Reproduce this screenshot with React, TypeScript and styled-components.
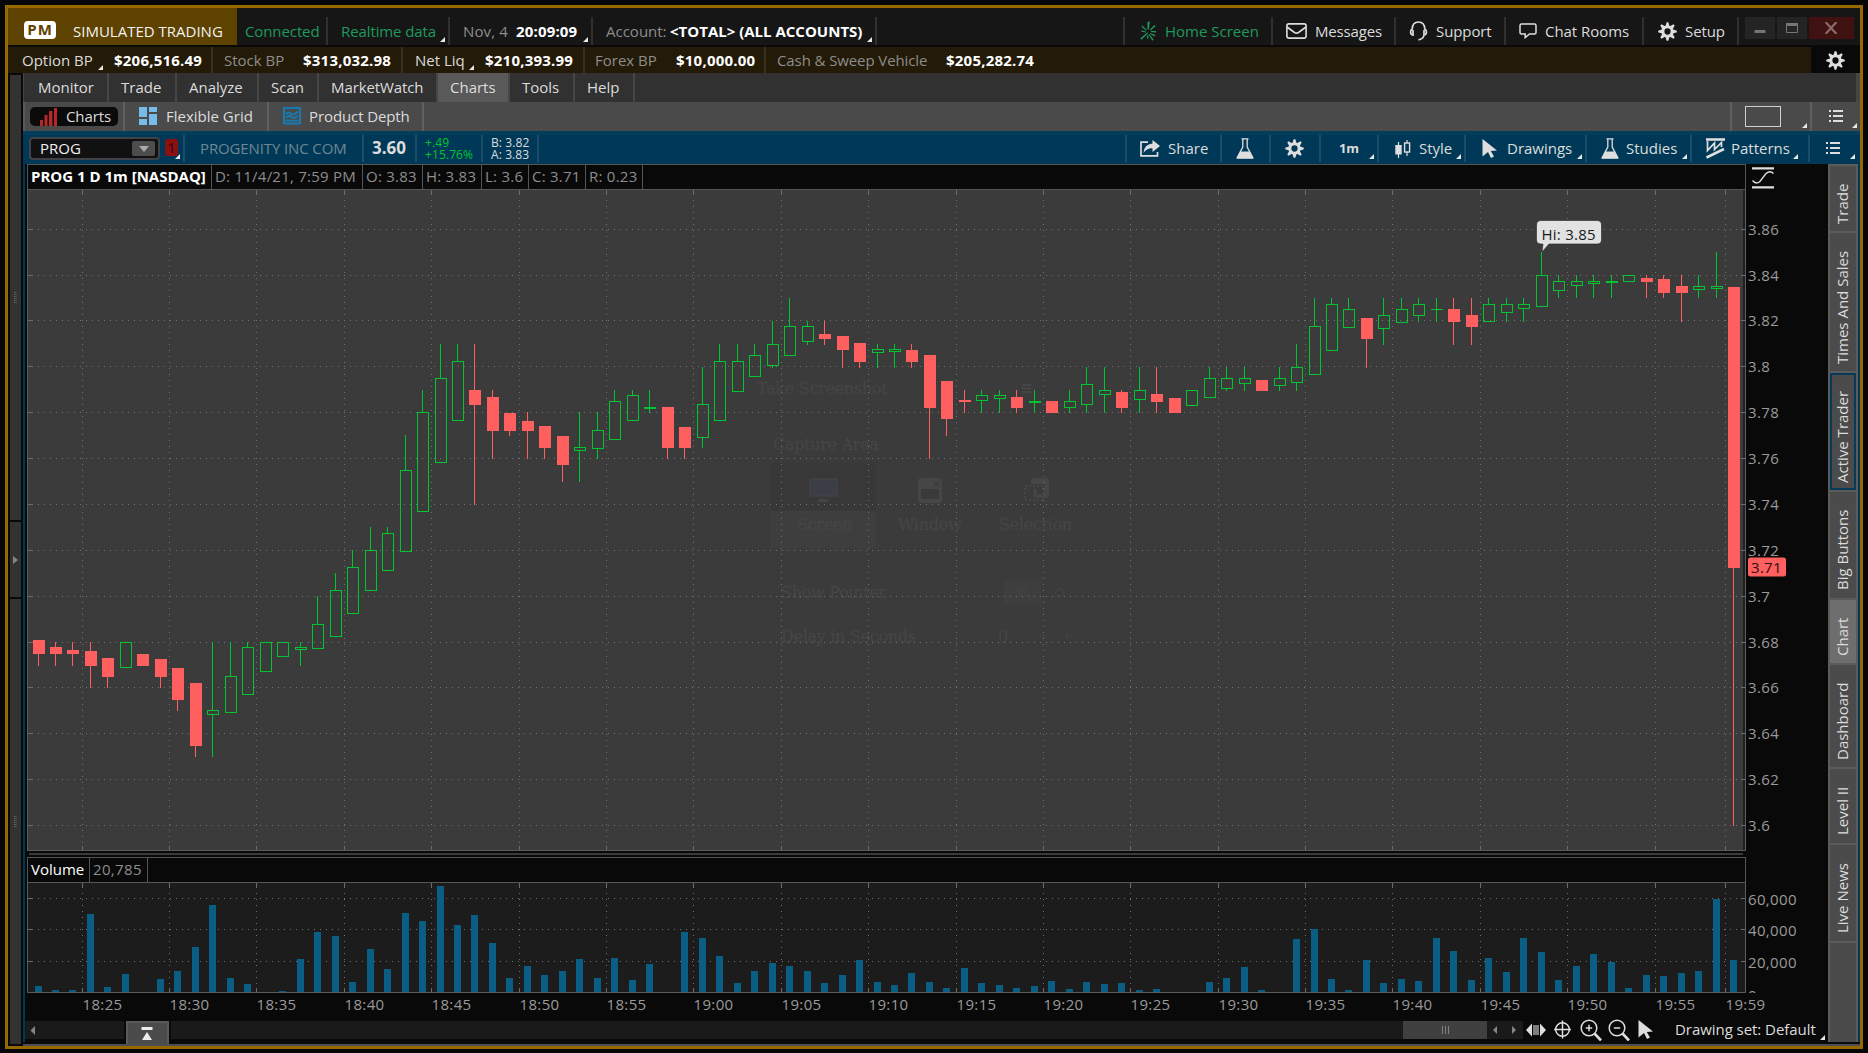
import React from "react";
import styled, { createGlobalStyle, css } from "styled-components";

const Global = createGlobalStyle`
  html, body { margin: 0; padding: 0; background: #060606; }
  * { box-sizing: border-box; }
  body { font-family: "Open Sans", "Noto Sans", sans-serif; font-size: 15px; color: #dcdcdc; overflow: hidden; }
  svg { display: block; flex: none; }
`;

const Desktop = styled.div`
  width: 1868px;
  height: 1053px;
  padding: 5px 5px 4px;
  background: #060606;
`;

const Frame = styled.div`
  width: 1858px;
  height: 1044px;
  border: 3px solid #956900;
  background: #090909;
  display: flex;
  flex-direction: column;
`;

/* ---------- shared cells ---------- */

const Cell = styled.div<{ $w: number; $pl?: number; $gap?: number; $line?: string; $bg?: string }>`
  position: relative;
  flex: none;
  width: ${(p) => p.$w}px;
  height: 100%;
  padding-left: ${(p) => p.$pl ?? 0}px;
  display: flex;
  align-items: center;
  gap: ${(p) => p.$gap ?? 0}px;
  white-space: pre;
  background: ${(p) => p.$bg ?? "transparent"};
  ${(p) => p.$line && css`border-right: 2px solid ${p.$line};`}
`;

const Label = styled.span<{ $c?: string; $b?: boolean; $w?: number; $s?: number; $ls?: number }>`
  flex: none;
  line-height: 20px;
  white-space: pre;
  color: ${(p) => p.$c ?? "#dcdcdc"};
  font-weight: ${(p) => (p.$b ? 700 : 400)};
  font-size: ${(p) => p.$s ?? 15}px;
  letter-spacing: ${(p) => p.$ls ?? 0}px;
  ${(p) => p.$w && css`width: ${p.$w}px;`}
`;

const Corner = styled.i<{ $r: number; $b: number }>`
  position: absolute;
  right: ${(p) => p.$r}px;
  bottom: ${(p) => p.$b}px;
  width: 5px;
  height: 5px;
  background: #e8e8e8;
  clip-path: polygon(100% 0, 100% 100%, 0 100%);
`;

const Spacer = styled.div`
  flex: 1;
`;

/* ---------- title bar ---------- */

const TitleBar = styled.div`
  height: 39px;
  padding-top: 9px;
  border-bottom: 2px solid #090909;
  background: linear-gradient(to right, #5e4200 229px, #161616 229px);
  display: flex;
`;

const PmBadge = styled.span`
  width: 32px;
  height: 18px;
  margin-bottom: 2px;
  border-radius: 4px;
  background: #ffffff;
  color: #5e4200;
  font-weight: 700;
  font-size: 15px;
  letter-spacing: 1px;
  line-height: 17px;
  text-align: center;
`;

const WindowButtons = styled.div`
  display: flex;
  gap: 2px;
  padding-left: 6px;
  width: 122px;
`;

const WindowButton = styled.div<{ $w: number; $bg: string }>`
  width: ${(p) => p.$w}px;
  height: 22px;
  background: ${(p) => p.$bg};
  display: flex;
  align-items: center;
  justify-content: center;
`;

/* ---------- account row ---------- */

const BalanceBar = styled.div`
  height: 26px;
  background: #231a08;
  display: flex;
`;

/* ---------- main tabs ---------- */

const MainTabs = styled.div`
  height: 29px;
  margin-left: 15px;
  background: #313131;
  border-left: 1px solid #454545;
  border-right: 4px solid #464646;
  display: flex;
  ${Label} { margin-top: -2px; }
`;

const SubTabs = styled.div`
  height: 29px;
  margin-left: 15px;
  background: #4a4a4a;
  border-left: 2px solid #5a5a5a;
  display: flex;
  ${Label} { margin-top: -2px; }
`;

const Pill = styled.div`
  width: 88px;
  height: 19px;
  margin: 0 5px;
  padding-left: 10px;
  border-radius: 5px;
  background: #0b0b0b;
  display: flex;
  align-items: center;
  gap: 9px;
`;

const LayoutBox = styled.div`
  width: 36px;
  height: 21px;
  border: 1px solid #cfcfcf;
`;

/* ---------- symbol bar ---------- */

const SymbolBar = styled.div`
  height: 33px;
  margin-left: 15px;
  padding: 4px 0 2px;
  background: linear-gradient(#053d5c 4px, #003957 4px);
  display: flex;
  ${Label} { margin-top: -2px; }
`;

const SymbolCell = styled(Cell)`
  align-items: flex-start;
`;

const Combo = styled.div`
  width: 131px;
  height: 23px;
  margin: 2px 0 0 6px;
  border: 2px solid #3f4347;
  border-radius: 4px;
  background: #111111;
  padding: 0 3px 0 9px;
  display: flex;
  align-items: center;
  justify-content: space-between;
`;

const ComboArrow = styled.span`
  width: 23px;
  height: 15px;
  border-radius: 2px;
  background: #4d4d4d;
  display: flex;
  align-items: center;
  justify-content: center;
`;

const LinkBadge = styled.div`
  width: 13px;
  height: 17px;
  margin: 4px 5px 0 5px;
  border-radius: 3px;
  background: #8e1010;
  color: #280d12;
  font-size: 15px;
  line-height: 16px;
  text-align: center;
`;

const Quote = styled.div<{ $c: string }>`
  color: ${(p) => p.$c};
  font-size: 12px;
  line-height: 12px;
  letter-spacing: 0.1px;
`;

/* ---------- body ---------- */

const Body = styled.div`
  flex: 1;
  display: flex;
  margin-top: -89px;
`;

const Rail = styled.div`
  width: 15px;
  height: 971px;
  padding: 0 2px;
  display: flex;
  flex-direction: column;
  gap: 2px;
`;

const RailPart = styled.div<{ $h: number }>`
  height: ${(p) => p.$h}px;
  background: #323232;
  display: flex;
  align-items: center;
  justify-content: center;
`;

const Work = styled.div`
  width: 1837px;
  margin-top: 89px;
  border-bottom: 2px solid #4e4e4e;
  display: flex;
`;

const Blue = styled.div`
  width: 2px;
  height: 878px;
  background: #003957;
`;

const ChartColumn = styled.div`
  width: 1803px;
  height: 880px;
  display: flex;
  flex-direction: column;
`;

const HeaderLine = styled.div`
  display: flex;
  height: 26px;
  margin-left: 2px;
`;

const HeaderBox = styled.div`
  width: 1719px;
  border: 1px solid #555555;
  background: #090909;
  display: flex;
`;

const HeadCell = styled.div<{ $w: number; $pl?: number }>`
  width: ${(p) => p.$w}px;
  padding: 0 0 3px ${(p) => p.$pl ?? 3}px;
  border-right: 1px solid #555555;
  display: flex;
  align-items: center;
`;

const Splitter = styled.div`
  height: 6px;
  margin-left: 4px;
  width: 1714px;
  padding-top: 2px;
  &::after { content: ""; display: block; height: 2px; background: #3b3b3b; }
`;

const PlotArea = styled.div`
  margin-left: 2px;
`;

const BottomBar = styled.div`
  height: 23px;
  display: flex;
  position: relative;
`;

const Track = styled.div<{ $w: number }>`
  width: ${(p) => p.$w}px;
  height: 18px;
  background: #1a1a1a;
  display: flex;
  align-items: center;
`;

const PanelToggle = styled.div`
  width: 43px;
  height: 23px;
  margin: 0 2px;
  border: 2px solid #5a5a5a;
  border-bottom: 0;
  background: #4b4b4b;
  padding: 0 1px 1px 0;
  display: flex;
  align-items: center;
  justify-content: center;
`;

const Thumb = styled.div`
  width: 84px;
  height: 18px;
  background: #404040;
  display: flex;
  align-items: center;
  justify-content: center;
`;

const Tools = styled.div`
  height: 17px;
  display: flex;
  align-items: center;
  padding-left: 3px;
  ${Label} { margin-top: -1px; }
`;

const SideTabs = styled.div`
  width: 30px;
  height: 878px;
  padding: 2px 2px 0;
  background: #5b5b5b;
  display: flex;
  flex-direction: column;
  gap: 2px;
`;

const SideTab = styled.div<{ $h: number; $state?: "on" | "focus" }>`
  height: ${(p) => p.$h}px;
  background: ${(p) => (p.$state === "on" ? "#6e6e6e" : "#4b4b4b")};
  ${(p) => p.$state === "focus" && css`box-shadow: inset 0 0 0 2px #063b58;`}
  display: flex;
  align-items: center;
  justify-content: center;
  writing-mode: vertical-rl;
  transform: rotate(180deg);
  line-height: 24px;
  padding: 0 0 10px 2px;
  white-space: nowrap;
`;

/* ---------- icons ---------- */

const W = "#dedede";

const Gear = ({ size = 19 }: { size?: number }) => (
  <svg width={size} height={size} viewBox="-10 -10 20 20">
    <circle r="4.8" fill="none" stroke={W} strokeWidth="3" />
    {[0, 45, 90, 135, 180, 225, 270, 315].map((a) => (
      <path key={a} d="M-2.3 -5.2 L-0.9 -9.8 H0.9 L2.3 -5.2 Z" fill={W} transform={`rotate(${a})`} />
    ))}
  </svg>
);

const HomeBurst = () => (
  <svg width="17" height="20" viewBox="0 0 17 20" fill="#1f9a5c">
    <path d="M7.4 8.5 L7.6 1 L9.8 0.3 L8.8 8.5 Z" />
    <path d="M9.8 8.8 L14.4 4 L15.6 5.2 L10.6 9.6 Z" />
    <path d="M11 10 H16 V11.6 L11 11 Z" />
    <path d="M10.6 12 L15.4 14 L14.6 15.4 L10 12.8 Z" />
    <path d="M9.2 13 L13.6 18.6 L12.4 19.8 L8.6 13.6 Z" />
    <path d="M7.4 11.2 L8 12.2 L1.4 18.8 L0.3 17.6 Z" />
    <path d="M6.8 9 L2.4 4.6 L1.6 5.8 L6 9.6 Z" />
    <path d="M6 10.4 L1.4 9.4 V10.8 L5.8 11.4 Z" />
    <path d="M7.4 14 H8.4 V17.6 H6.8 Z" />
  </svg>
);

const Mail = () => (
  <svg width="21" height="16" viewBox="0 0 21 16" fill="none" stroke={W} strokeWidth="1.6">
    <rect x="0.9" y="0.9" width="19.2" height="14.2" rx="2" />
    <path d="M1 4 L8.5 9.5 Q10.5 10.8 12.5 9.5 L20 4" />
  </svg>
);

const Headset = () => (
  <svg width="19" height="20" viewBox="0 0 19 20" fill="none" stroke={W} strokeWidth="1.7">
    <path d="M3.6 14 Q1.6 13.5 1.6 11 Q1.6 9 3.2 8 Q3.5 1 9.5 1 Q15.5 1 15.8 8 Q17.4 9 17.4 11 Q17.4 13.5 15.4 14" />
    <path d="M4 9 V15 M15 9 V14 Q14.5 18 9.5 18.8" />
  </svg>
);

const Chat = () => (
  <svg width="18" height="16" viewBox="0 0 18 16" fill="none" stroke={W} strokeWidth="1.5">
    <path d="M2.5 1 H15.5 Q17 1 17 2.5 V9.5 Q17 11 15.5 11 H10.5 L6.2 14.6 V11 H2.5 Q1 11 1 9.5 V2.5 Q1 1 2.5 1 Z" />
  </svg>
);

const BarsIcon = () => (
  <svg width="17" height="18" viewBox="0 0 17 18" fill="#b62828">
    <rect x="0" y="12" width="3" height="6" />
    <rect x="4.5" y="7" width="3" height="11" />
    <rect x="9" y="3" width="3.4" height="15" />
    <rect x="14" y="0" width="3" height="18" />
  </svg>
);

const GridIcon = () => (
  <svg width="18" height="19" viewBox="0 0 18 19" fill="#75bde8">
    <rect x="0" y="0" width="8" height="10" />
    <rect x="10" y="0" width="8" height="5" />
    <rect x="10" y="7" width="8" height="11" />
    <rect x="0" y="12" width="8" height="6" />
  </svg>
);

const DepthIcon = () => (
  <svg width="18" height="19" viewBox="0 0 18 19" fill="none" stroke="#157bb0">
    <rect x="1" y="1" width="16" height="15.5" strokeWidth="2" />
    <path d="M3 7.5 Q5 4 7.5 6.5 Q10 9 15 4.500 M3 11 Q5 7.500 7.500 9.500 Q10.500 12.500 15 8.500" strokeWidth="1.8" />
    <path d="M3 13.6 H15" strokeWidth="1.8" />
  </svg>
);

const ListIcon = () => (
  <svg width="14" height="14" viewBox="0 0 14 14" fill={W}>
    {[0, 5, 10].map((y) => (
      <g key={y}>
        <rect x="0" y={y} width="2" height="2" />
        <rect x="4" y={y} width="10" height="2" />
      </g>
    ))}
  </svg>
);

const ShareIcon = () => (
  <svg width="20" height="17" viewBox="0 0 20 17">
    <path d="M8 2.2 H1 V15.8 H17.5 V12" fill="none" stroke={W} strokeWidth="1.7" />
    <path d="M12.5 0 L20 6 L12.5 12 V8.4 Q7 8 3.5 13 Q4 4.500 12.5 3.6 Z" fill={W} />
  </svg>
);

const Flask = () => (
  <svg width="18" height="21" viewBox="0 0 18 21">
    <path d="M5.5 0.8 H12.5 M6.8 1 V9 L1.2 19.6 H16.8 L11.2 9 V1" fill="none" stroke={W} strokeWidth="1.3" />
    <path d="M4.5 13.5 H13.5 L17.4 20.8 H0.6 Z" fill={W} />
  </svg>
);

const StyleIcon = () => (
  <svg width="16" height="18" viewBox="0 0 16 18">
    <path d="M3.5 2 V18" stroke={W} strokeWidth="1.2" />
    <rect x="0.3" y="5" width="6.4" height="9.5" fill={W} />
    <path d="M12 0 V3 M12 12 V16" stroke={W} strokeWidth="1.2" />
    <rect x="9.6" y="3" width="5" height="9" fill="none" stroke={W} strokeWidth="1.4" />
  </svg>
);

const Pointer = () => (
  <svg width="15" height="19" viewBox="0 0 15 19">
    <path d="M0.5 0 L15 11.5 L8.8 12 L12 17.6 L9 19 L6 13 L0.5 17.5 Z" fill={W} />
  </svg>
);

const PatternIcon = () => (
  <svg width="19" height="21" viewBox="0 0 19 21" fill="none" stroke={W}>
    <path d="M0 1.5 H19" strokeWidth="2.6" />
    <path d="M1.5 3 V12.5 L8.5 5 V11.5 L15.5 4.5 V9" strokeWidth="1.7" />
    <path d="M0.5 19.5 L18 11" strokeWidth="2.6" />
  </svg>
);

const CurveIcon = () => (
  <svg width="22" height="24" viewBox="0 -2 22 24" fill="none" stroke={W}>
    <path d="M0 1.4 H22 M0 20.4 H22" strokeWidth="2.4" />
    <path d="M0.5 13.5 Q3.5 17.5 7.5 15 L14 6.5 Q18 3 21.5 6.5" strokeWidth="1.4" />
  </svg>
);

const Resize = () => (
  <svg width="20" height="14" viewBox="0 0 20 14" fill={W}>
    <path d="M0 7 L6 0.5 V13.5 Z M20 7 L14 0.5 V13.5 Z" />
    <path d="M8 2 V12 M10 2 V12 M12 2 V12" stroke={W} strokeWidth="1.1" />
  </svg>
);

const Target = () => (
  <svg width="17" height="19" viewBox="0 0 17 19" fill="none" stroke={W} strokeWidth="1.5">
    <circle cx="8.5" cy="9.5" r="6.8" />
    <path d="M8.5 0.5 V18.5 M0 9.5 H17" />
  </svg>
);

const Magnifier = ({ plus }: { plus?: boolean }) => (
  <svg width="22" height="22" viewBox="0 0 22 22" fill="none" stroke={W}>
    <circle cx="9" cy="9" r="7.8" strokeWidth="1.5" />
    <path d="M14.5 14.5 L21 21.5" strokeWidth="2.6" />
    <path d={plus ? "M5.8 9 H12.2 M9 5.8 V12.2" : "M5.8 9 H12.2"} strokeWidth="1.5" />
  </svg>
);

/* ---------- chart data ---------- */

type Candle = [dir: 0 | 1, top: number, bottom: number, high?: number, low?: number];

// Body top/bottom and wick extents in canvas units; 1 = rising, 0 = falling.
const candles: Candle[] = [
  [0, 640, 654, 640, 666], [0, 647, 654, 642, 666], [0, 650, 654, 642, 666], [0, 651, 666, 642, 688],
  [0, 658, 677, 658, 688], [1, 642, 668], [0, 654, 666], [0, 659, 677, 659, 688], [0, 668, 700, 668, 711],
  [0, 683, 746, 683, 757], [1, 710, 715, 642, 757], [1, 676, 713, 642], [1, 647, 695, 642], [1, 642, 672],
  [1, 642, 657], [1, 647, 650, 642, 666], [1, 624, 649, 596], [1, 590, 637, 573], [1, 567, 614, 550],
  [1, 550, 591, 527], [1, 533, 571, 527], [1, 470, 552, 435], [1, 412, 512, 390], [1, 378, 463, 344],
  [1, 361, 421, 344], [0, 390, 405, 344, 505], [0, 397, 431, 390, 459], [0, 413, 431, 413, 436],
  [0, 421, 431, 412, 459], [0, 426, 448, 426, 459], [0, 436, 465, 436, 482], [1, 447, 451, 412, 482],
  [1, 430, 449, 412, 459], [1, 401, 440, 390], [1, 395, 421, 390], [1, 407, 409, 390, 413],
  [0, 407, 448, 407, 459], [0, 427, 448, 427, 459], [1, 404, 438, 367, 448], [1, 361, 421, 344],
  [1, 361, 392, 344], [1, 355, 377, 344], [1, 344, 366, 321, 368], [1, 326, 356, 298], [1, 326, 342, 321, 345],
  [0, 334, 339, 321, 345], [0, 336, 350, 336, 368], [0, 343, 362, 343, 368], [1, 349, 353, 344, 368],
  [1, 349, 352, 344, 368], [0, 350, 362, 344, 368], [0, 355, 408, 355, 459], [0, 381, 419, 381, 436],
  [0, 400, 402, 390, 413], [1, 395, 401, 390, 413], [1, 395, 399, 390, 413], [0, 397, 408, 390, 413],
  [1, 401, 403, 390, 413], [0, 401, 413], [1, 401, 408, 390, 413], [1, 384, 405, 367, 413],
  [1, 390, 395, 367, 413], [0, 392, 408, 390, 413], [1, 390, 400, 367, 413], [0, 394, 402, 367, 413],
  [0, 398, 413], [1, 390, 406], [1, 378, 398, 367], [1, 378, 389, 367, 391], [1, 378, 384, 367, 391],
  [0, 380, 391], [1, 378, 386, 367, 391], [1, 367, 383, 344, 391], [1, 326, 375, 298], [1, 304, 351, 298],
  [1, 309, 328, 298], [0, 318, 339, 318, 368], [1, 315, 329, 298, 345], [1, 309, 323, 298],
  [1, 304, 316, 298, 322], [1, 309, 310, 298, 322], [0, 309, 322, 298, 345], [0, 315, 327, 298, 345],
  [1, 304, 322, 298], [1, 304, 313, 298, 322], [1, 304, 309, 298, 322], [1, 275, 307, 252],
  [1, 281, 291, 275, 298], [1, 281, 286, 275, 298], [1, 281, 284, 275, 298], [1, 281, 283, 275, 298],
  [1, 275, 282], [0, 278, 282, 275, 298], [0, 279, 293, 275, 298], [0, 286, 293, 275, 322],
  [1, 286, 290, 275, 298], [1, 286, 289, 252, 298], [0, 287, 568, 287, 826],
];

const volumes = [
  6, 2, 2, 78, 5, 18, 0, 13, 21, 45, 87, 14, 8, 0, 1, 33, 60, 56, 10, 43, 23, 79, 71, 106, 67, 77, 49, 14, 26, 17, 21,
  33, 14, 34, 12, 28, 0, 60, 54, 36, 9, 21, 29, 26, 21, 9, 17, 32, 10, 7, 19, 10, 4, 24, 9, 7, 4, 6, 11, 3, 10, 8, 9,
  2, 3, 0, 0, 10, 14, 25, 2, 0, 53, 63, 13, 2, 32, 9, 13, 11, 54, 41, 12, 34, 20, 54, 40, 12, 26, 38, 30, 4, 17, 16,
  19, 21, 93, 32,
];

const times = [
  "18:25", "18:30", "18:35", "18:40", "18:45", "18:50", "18:55", "19:00", "19:05", "19:10", "19:15", "19:20",
  "19:25", "19:30", "19:35", "19:40", "19:45", "19:50", "19:55", "19:59",
];
const prices = ["3.86", "3.84", "3.82", "3.8", "3.78", "3.76", "3.74", "3.72", "3.7", "3.68", "3.66", "3.64", "3.62", "3.6"];

const candleX = (i: number) => Math.floor(38 + 17.4795 * i);
const timeX = (i: number) => (i === 19 ? 1725 : Math.floor(82.1 + 87.39 * i));
const priceY = (i: number) => Math.floor(229.2 + 45.87 * i);

const GREEN = "#00c531";
const RED = "#ff5f5f";

const Grid = ({ top, bottom, rows }: { top: number; bottom: number; rows: number[] }) => (
  <g shapeRendering="crispEdges">
    {times.map((t, i) => {
      const x = timeX(i) + 0.5;
      return (
        <g key={t}>
          <path d={`M${x} ${top + 10} V${bottom - 5}`} stroke="#717171" strokeDasharray="1 5" />
          <path d={`M${x} ${top} v5 M${x} ${bottom} v-4`} stroke="#6c6c6c" />
        </g>
      );
    })}
    {rows.map((y) => (
      <g key={y}>
        <path d={`M38 ${y + 0.5} H1740`} stroke="#717171" strokeDasharray="1 5" />
        <path d={`M28 ${y + 0.5} h5 M1741 ${y + 0.5} h5`} stroke="#6c6c6c" />
      </g>
    ))}
  </g>
);

const AxisText = styled.text`
  fill: #9a9a9a;
  font-size: 15px;
  letter-spacing: 0.35px;
`;

const Ghost = styled.text`
  fill: #464646;
  font-family: "DejaVu Serif", serif;
  font-size: 16px;
  letter-spacing: -0.3px;
`;

const GhostDialog = () => (
  <g>
    <rect x="771" y="463" width="105" height="48" rx="2" fill="#383838" />
    <rect x="771" y="511" width="105" height="37" fill="#3e3e3e" />
    <Ghost x="757" y="393.5">Take Screenshot</Ghost>
    <Ghost x="773" y="449.5">Capture Area</Ghost>
    <Ghost x="797" y="530">Screen</Ghost>
    <Ghost x="898" y="530">Window</Ghost>
    <Ghost x="999" y="530">Selection</Ghost>
    <Ghost x="781" y="597.5">Show Pointer</Ghost>
    <Ghost x="781" y="642">Delay in Seconds</Ghost>
    <Ghost x="998" y="642">0</Ghost>
    <rect x="810" y="479" width="27" height="17" fill="#3b3e45" stroke="#474747" />
    <path d="M820 499 h6 l3 3 h-12 Z" fill="#444444" />
    <rect x="918" y="478" width="24" height="25" rx="3" fill="#464646" />
    <rect x="921" y="489" width="18" height="10" fill="#3a3a3a" />
    <path d="M934 482 l5 5 M939 482 l-5 5" stroke="#3a3a3a" strokeWidth="1.4" />
    <path d="M1034 478 h12 q3 0 3 3 v14 q0 3 -3 3 h-12 q-3 0 -3 -3 v-14 q0 -3 3 -3 Z" fill="#464646" />
    <path d="M1031 484 h13 v14 h-13 Z" fill="#3a3a3a" />
    <path d="M1035 489 v7 h7" stroke="#464646" strokeWidth="3" fill="none" />
    <rect x="1025" y="486" width="18" height="14" fill="none" stroke="#464646" strokeWidth="2" strokeDasharray="2 2" />
    <path d="M1022 385 h9 M1022 388.5 h9 M1022 392 h9" stroke="#4a4a4a" strokeWidth="1.6" />
    <rect x="1004" y="581" width="37" height="24" fill="#3e3e3e" />
    <path d="M1019 588 v8 M1022 588 v8 M1025 588 v8" stroke="#444444" />
    <circle cx="1059.5" cy="592.5" r="4" fill="none" stroke="#424242" strokeWidth="1.5" />
    <path d="M1040 636.5 h10 M1062 636.5 h10 M1067 632 v9" stroke="#3d4146" strokeWidth="1.5" />
  </g>
);

const PriceChart = () => (
  <svg width="1801" height="661" viewBox="27 190 1801 661">
    <rect x="27" y="190" width="1719" height="661" fill="#202020" />
    <rect x="28" y="190" width="1715" height="660" fill="#3b3b3b" />
    <path d="M27.5 190 V850.5 H1745.5 V190" fill="none" stroke="#5c5c5c" />
    <GhostDialog />
    <Grid top={190} bottom={850} rows={prices.map((_, i) => priceY(i))} />
    <g shapeRendering="crispEdges">
      {candles.map(([up, top, bottom, high = top, low = bottom], i) => {
        const x = candleX(i);
        const color = up ? GREEN : RED;
        return (
          <g key={i} stroke={color}>
            {high < top && <path d={`M${x + 0.5} ${high} V${top}`} />}
            {low > bottom && <path d={`M${x + 0.5} ${bottom} V${low}`} />}
            {up && bottom - top > 2 ? (
              <rect x={x - 4.5} y={top + 0.5} width="11" height={bottom - top - 1} fill="none" />
            ) : (
              <rect x={x - 5} y={top} width="12" height={bottom - top} fill={color} stroke="none" />
            )}
          </g>
        );
      })}
    </g>
    <path
      d="M1541 220.5 H1597 Q1601.5 220.5 1601.5 225 V239.5 Q1601.5 244 1597 244 H1549 L1542 252 L1543 244 H1541 Q1536.5 244 1536.5 239.5 V225 Q1536.5 220.5 1541 220.5 Z"
      fill="#e2e2e2"
      stroke="#242424"
      strokeWidth="0.6"
    />
    <text x="1541.5" y="239.500" fill="#1a1a1a" fontSize="15" letterSpacing="0.25">Hi: 3.85</text>
    {prices.map((p, i) => (
      <AxisText key={p} x="1748" y={priceY(i) + 6}>{p}</AxisText>
    ))}
    <rect x="1748" y="557.5" width="38" height="19" rx="2.5" fill={RED} />
    <text x="1751" y="572.5" fill="#2a1010" fontSize="15" letterSpacing="0.3">3.71</text>
  </svg>
);

const VolumeChart = () => (
  <svg width="1801" height="138" viewBox="27 883 1801 138">
    <rect x="28" y="883" width="1717" height="109" fill="#1c1c1c" />
    <Grid top={883} bottom={992} rows={[898, 929, 961]} />
    <g shapeRendering="crispEdges" fill="#0b5e83">
      {volumes.map((h, i) => (h ? <rect key={i} x={candleX(i) - 3} y={992 - h} width="7" height={h} /> : null))}
    </g>
    <path d="M27.5 883 V992.5 H1745.5 V883" fill="none" stroke="#5c5c5c" />
    <AxisText x="1748" y="904.5">60,000</AxisText>
    <AxisText x="1748" y="935.5">40,000</AxisText>
    <AxisText x="1748" y="967.5">20,000</AxisText>
    <clipPath id="axis-end"><rect x="1746" y="980" width="40" height="13" /></clipPath>
    <g clipPath="url(#axis-end)"><AxisText x="1748" y="1000.5">0</AxisText></g>
    {times.map((t, i) => (
      <AxisText key={t} x={timeX(i) + 0.5} y="1010">{t}</AxisText>
    ))}
  </svg>
);

/* ---------- page data ---------- */

const TL = "#303030";
const BL = "#3a3020";
const GREY = "#8d8d8d";
const BLUE_LINE = "#1c4e6b";

const mainTabs: [string, number, number][] = [
  ["Monitor", 85, 14], ["Trade", 68, 12], ["Analyze", 82, 12], ["Scan", 60, 12], ["MarketWatch", 119, 12],
  ["Charts", 72, 12], ["Tools", 65, 12], ["Help", 60, 12],
];

const headCells: [string, number][] = [
  ["D: 11/4/21, 7:59 PM", 151], ["O: 3.83", 60], ["H: 3.83", 59], ["L: 3.6", 47], ["C: 3.71", 57], ["R: 0.23", 57],
];

const sideTabs: [string, number, ("on" | "focus")?][] = [
  ["Trade", 65], ["Times And Sales", 138], ["Active Trader", 117, "focus"], ["Big Buttons", 106], ["Chart", 63, "on"],
  ["Dashboard", 102], ["Level II", 74], ["Live News", 96],
];

const Grip = () => (
  <svg width="3" height="12" viewBox="0 0 3 12">
    <path d="M0.5 0 V12 M2 0 V12" stroke="#6a6a6a" strokeDasharray="1 1" />
  </svg>
);

const Amount = ({ children }: { children: string }) => (
  <Label $c="#ffffff" $b $ls={0.22}>{children}</Label>
);

export default function App() {
  return (
    <Desktop>
      <Global />
      <Frame>
        <TitleBar>
          <Cell $w={229} $pl={16} $gap={17}>
            <PmBadge>PM</PmBadge>
            <Label $c="#f2f2f2">SIMULATED TRADING</Label>
          </Cell>
          <Cell $w={91} $pl={8} $line={TL}><Label $c="#1f9a5c" $ls={-0.1}>Connected</Label></Cell>
          <Cell $w={122} $pl={13} $line={TL}>
            <Label $c="#1f9a5c" $ls={-0.1}>Realtime data</Label>
            <Corner $r={3} $b={3} />
          </Cell>
          <Cell $w={143} $pl={13} $gap={8} $line={TL}>
            <Label $c={GREY} $ls={0.15}>Nov, 4</Label>
            <Label $c="#ffffff" $b $ls={0.15}>20:09:09</Label>
            <Corner $r={3} $b={3} />
          </Cell>
          <Cell $w={284} $pl={13} $line={TL}>
            <Label $c={GREY} $w={64}>Account:</Label>
            <Label $c="#ffffff" $b>{"<TOTAL> (ALL ACCOUNTS)"}</Label>
            <Corner $r={3} $b={3} />
          </Cell>
          <Cell $w={248} $line={TL} />
          <Cell $w={148} $pl={15} $gap={8} $line={TL}><HomeBurst /><Label $c="#1f9a5c">Home Screen</Label></Cell>
          <Cell $w={123} $pl={13} $gap={8} $line={TL}><Mail /><Label $ls={-0.15}>Messages</Label></Cell>
          <Cell $w={110} $pl={13} $gap={8} $line={TL}><Headset /><Label $ls={-0.1}>Support</Label></Cell>
          <Cell $w={138} $pl={13} $gap={8} $line={TL}><Chat /><Label $ls={-0.05}>Chat Rooms</Label></Cell>
          <Cell $w={95} $pl={14} $gap={8} $line={TL}><Gear /><Label $ls={-0.1}>Setup</Label></Cell>
          <WindowButtons>
            <WindowButton $w={30} $bg="#242424">
              <svg width="12" height="12"><rect x="0.5" y="8" width="11" height="3" fill="#757575" /></svg>
            </WindowButton>
            <WindowButton $w={30} $bg="#242424">
              <svg width="12" height="10"><path d="M0.5 1.5 H11.5 V9.5 H0.5 Z" fill="none" stroke="#757575" /><path d="M0 1.5 H12" stroke="#757575" strokeWidth="3" /></svg>
            </WindowButton>
            <WindowButton $w={45} $bg="#3f1111">
              <svg width="14" height="12"><path d="M0.5 0 L11.5 12 M11.5 0 L0.5 12" stroke="#8a6a6a" strokeWidth="2.2" /></svg>
            </WindowButton>
          </WindowButtons>
        </TitleBar>

        <BalanceBar>
          <Cell $w={205} $pl={14} $line={BL}>
            <Label $w={92}>Option BP</Label><Amount>$206,516.49</Amount><Corner $r={108} $b={3} />
          </Cell>
          <Cell $w={190} $pl={11} $line={BL}>
            <Label $c={GREY} $w={79}>Stock BP</Label><Amount>$313,032.98</Amount>
          </Cell>
          <Cell $w={182} $pl={12} $line={BL}>
            <Label $w={70}>Net Liq</Label><Amount>$210,393.99</Amount><Corner $r={109} $b={3} />
          </Cell>
          <Cell $w={181} $pl={10} $line={BL}>
            <Label $c={GREY} $w={81}>Forex BP</Label><Amount>$10,000.00</Amount>
          </Cell>
          <Cell $w={300} $pl={11}>
            <Label $c={GREY} $w={169} $ls={-0.1}>Cash &amp; Sweep Vehicle</Label><Amount>$205,282.74</Amount>
          </Cell>
          <Spacer />
          <Cell $w={49} $pl={15} $bg="#090909"><Gear /></Cell>
        </BalanceBar>

        <MainTabs>
          {mainTabs.map(([name, w, pl]) => (
            <Cell key={name} $w={w} $pl={pl} $line="#464646" $bg={name === "Charts" ? "#595959" : undefined}>
              <Label $ls={name === "MarketWatch" ? -0.1 : 0}>{name}</Label>
            </Cell>
          ))}
        </MainTabs>

        <SubTabs>
          <Cell $w={100} $line="#5f5f5f">
            <Pill><BarsIcon /><Label $ls={-0.1}>Charts</Label></Pill>
          </Cell>
          <Cell $w={144} $pl={14} $gap={9} $line="#5f5f5f"><GridIcon /><Label>Flexible Grid</Label></Cell>
          <Cell $w={155} $pl={14} $gap={8} $line="#5f5f5f"><DepthIcon /><Label $ls={-0.1}>Product Depth</Label></Cell>
          <Spacer />
          <Cell $w={1} $line="#5f5f5f" />
          <Cell $w={80} $pl={13} $line="#5f5f5f"><LayoutBox /><Corner $r={3} $b={3} /></Cell>
          <Cell $w={48} $pl={17}><ListIcon /><Corner $r={3} $b={3} /></Cell>
        </SubTabs>

        <SymbolBar>
          <SymbolCell $w={162} $line={BLUE_LINE}>
            <Combo>
              <Label $c="#f0f0f0">PROG</Label>
              <ComboArrow><svg width="10" height="6"><path d="M0 0 H10 L5 6 Z" fill="#aaaaaa" /></svg></ComboArrow>
            </Combo>
            <LinkBadge>1</LinkBadge>
            <Corner $r={3} $b={3} />
          </SymbolCell>
          <Cell $w={179} $pl={15} $line={BLUE_LINE}><Label $c="#6f8794" $ls={-0.12}>PROGENITY INC COM</Label></Cell>
          <Cell $w={53} $pl={8} $line={BLUE_LINE}><Label $b $s={17}>3.60</Label></Cell>
          <Cell $w={66} $pl={8} $line={BLUE_LINE}><div><Quote $c="#00c531">+.49</Quote><Quote $c="#00c531">+15.76%</Quote></div></Cell>
          <Cell $w={56} $pl={8} $line={BLUE_LINE}><div><Quote $c="#dcdcdc">B: 3.82</Quote><Quote $c="#dcdcdc">A: 3.83</Quote></div></Cell>
          <Spacer />
          <Cell $w={2} $line={BLUE_LINE} />
          <Cell $w={95} $pl={13} $gap={8} $line={BLUE_LINE}><ShareIcon /><Label>Share</Label></Cell>
          <Cell $w={49} $pl={14} $line={BLUE_LINE}><Flask /></Cell>
          <Cell $w={50} $pl={14} $line={BLUE_LINE}><Gear /></Cell>
          <Cell $w={58} $pl={18} $line={BLUE_LINE}><Label $s={13} $b $ls={-0.3}>1m</Label><Corner $r={3} $b={3} /></Cell>
          <Cell $w={87} $pl={16} $gap={8} $line={BLUE_LINE}><StyleIcon /><Label>Style</Label><Corner $r={3} $b={3} /></Cell>
          <Cell $w={121} $pl={16} $gap={10} $line={BLUE_LINE}><Pointer /><Label>Drawings</Label><Corner $r={3} $b={3} /></Cell>
          <Cell $w={105} $pl={14} $gap={7} $line={BLUE_LINE}><Flask /><Label>Studies</Label><Corner $r={3} $b={3} /></Cell>
          <Cell $w={118} $pl={14} $gap={6} $line={BLUE_LINE}><PatternIcon /><Label>Patterns</Label><Corner $r={10} $b={3} /></Cell>
          <Cell $w={50} $pl={16}><ListIcon /><Corner $r={5} $b={3} /></Cell>
        </SymbolBar>

        <Body>
          <Rail>
            <RailPart $h={445}><Grip /></RailPart>
            <RailPart $h={75}><svg width="5" height="8"><path d="M0 0 L5 4 L0 8 Z" fill="#858585" /></svg></RailPart>
            <RailPart $h={445}><Grip /></RailPart>
          </Rail>
          <Work>
            <Blue />
            <ChartColumn>
              <HeaderLine>
                <HeaderBox>
                  <HeadCell $w={184}><Label $c="#ffffff" $b>PROG 1 D 1m [NASDAQ]</Label></HeadCell>
                  {headCells.map(([t, w]) => (
                    <HeadCell key={t} $w={w}><Label $c={GREY} $ls={0.24}>{t}</Label></HeadCell>
                  ))}
                </HeaderBox>
                <Cell $w={40} $pl={6}><CurveIcon /></Cell>
              </HeaderLine>
              <PlotArea><PriceChart /></PlotArea>
              <Splitter />
              <HeaderLine>
                <HeaderBox>
                  <HeadCell $w={62}><Label $c="#ffffff">Volume</Label></HeadCell>
                  <HeadCell $w={58}><Label $c={GREY} $ls={0.35}>20,785</Label></HeadCell>
                </HeaderBox>
              </HeaderLine>
              <PlotArea><VolumeChart /></PlotArea>
              <BottomBar>
                <Track $w={99}><svg width="12" height="9"><path d="M10 0 L5.5 4.5 L10 9 Z" fill="#858585" /></svg></Track>
                <PanelToggle>
                  <svg width="12" height="13"><path d="M0.5 0 H11.5 V3 H0.5 Z M6 5 L11 13 H1 Z" fill="#ececec" /></svg>
                </PanelToggle>
                <Track $w={1232} />
                <Thumb><svg width="7" height="8"><path d="M0.5 0 V8 M3.5 0 V8 M6.5 0 V8" stroke="#808080" /></svg></Thumb>
                <Track $w={36}>
                  <svg width="30" height="8"><path d="M10 0 L6 4 L10 8 Z M25 0 L29 4 L25 8 Z" fill="#858585" /></svg>
                </Track>
                <Tools>
                  <Cell $w={28}><Resize /></Cell>
                  <Cell $w={26}><Target /></Cell>
                  <Cell $w={28}><Magnifier plus /></Cell>
                  <Cell $w={30}><Magnifier /></Cell>
                  <Cell $w={37}><Pointer /></Cell>
                  <Label $ls={-0.05}>Drawing set: Default</Label>
                </Tools>
                <Corner $r={3} $b={4} />
              </BottomBar>
            </ChartColumn>
            <SideTabs>
              {sideTabs.map(([name, h, state]) => (
                <SideTab key={name} $h={h} $state={state}>{name}</SideTab>
              ))}
              <SideTab $h={99} />
            </SideTabs>
            <Blue />
          </Work>
        </Body>
      </Frame>
    </Desktop>
  );
}
